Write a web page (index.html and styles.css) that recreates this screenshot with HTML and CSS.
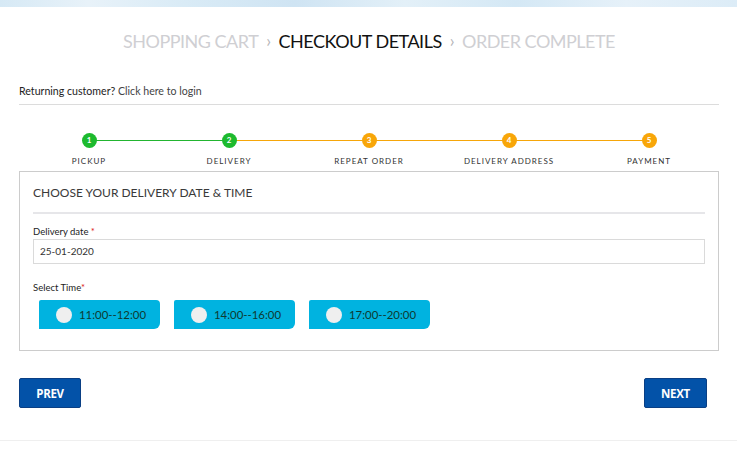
FILE: index.html
```html
<!DOCTYPE html>
<html>
<head>
<meta charset="utf-8">
<link rel="stylesheet" href="styles.css">
</head>
<body>
<div class="banner"></div>
<div class="page">
  <h1 class="crumbs">
    <span class="crumb">SHOPPING CART</span>
    <span class="sep">&#8250;</span>
    <span class="crumb active">CHECKOUT DETAILS</span>
    <span class="sep">&#8250;</span>
    <span class="crumb">ORDER COMPLETE</span>
  </h1>
  <div class="returning">Returning customer? <a class="login">Click here to login</a></div>

  <div class="steps">
    <div class="step done"><span class="dot">1</span><span class="lbl">PICKUP</span></div>
    <div class="step done"><span class="dot">2</span><span class="lbl">DELIVERY</span></div>
    <div class="step todo"><span class="dot">3</span><span class="lbl">REPEAT ORDER</span></div>
    <div class="step todo"><span class="dot">4</span><span class="lbl">DELIVERY ADDRESS</span></div>
    <div class="step todo last"><span class="dot">5</span><span class="lbl">PAYMENT</span></div>
  </div>

  <div class="box">
    <div class="box-title">CHOOSE YOUR DELIVERY DATE &amp; TIME</div>
    <label class="field-label">Delivery date <span class="req">*</span></label>
    <div class="input">25-01-2020</div>
    <label class="field-label time-label">Select Time<span class="req">*</span></label>
    <div class="slots">
      <div class="slot"><span class="radio"></span>11:00--12:00</div>
      <div class="slot"><span class="radio"></span>14:00--16:00</div>
      <div class="slot"><span class="radio"></span>17:00--20:00</div>
    </div>
  </div>

  <div class="nav">
    <button class="btn">PREV</button>
    <button class="btn">NEXT</button>
  </div>
</div>
<div class="footer-line"></div>
</body>
</html>
```

FILE: styles.css
```css
* { box-sizing: border-box; }
html, body { margin: 0; padding: 0; background: #fff; }
body { font-family: Lato, "Open Sans", sans-serif; color: #333; width: 737px; }

.banner {
  height: 7px;
  background: linear-gradient(90deg, #d6e9f5 0%, #e8f2f9 12%, #d9ebf6 25%, #cfe4f3 40%, #e3f0f8 55%, #d4e8f5 70%, #e6f1f9 85%, #dcecf7 100%);
}

.page { width: 700px; margin: 0 18px 0 19px; }

.crumbs {
  margin: 22px 0 0;
  text-align: center;
  font-weight: 400;
  font-size: 18px;
  line-height: 24px;
  letter-spacing: -0.5px;
  color: #cfcfd3;
  display: flex;
  justify-content: center;
  gap: 8px;
}
.crumb.active { color: #111; }
.sep { color: #b5b5b8; font-size: 17px; }

.returning {
  margin-top: 31px;
  font-size: 10.6px;
  color: #222;
  line-height: 14px;
  padding-bottom: 6px;
  border-bottom: 1px solid #dcdcdc;
}
.login { color: #444; }

.steps {
  display: grid;
  grid-template-columns: repeat(5, 1fr);
  margin-top: 28px;
}
.step {
  position: relative;
  display: flex;
  flex-direction: column;
  align-items: center;
}
.step::after {
  content: "";
  position: absolute;
  top: 7px;
  left: 50%;
  width: 100%;
  height: 1px;
  background: #f6a609;
}
.step.done:first-child::after { background: #22b530; }
.step.last::after { display: none; }
.dot {
  position: relative;
  z-index: 1;
  width: 15px;
  height: 15px;
  border-radius: 50%;
  color: #fff;
  font-size: 8px;
  font-weight: 700;
  line-height: 15px;
  text-align: center;
}
.done .dot { background: #1dba2e; }
.todo .dot { background: #f8a609; }
.lbl {
  margin-top: 8px;
  font-size: 8px;
  letter-spacing: 1px;
  color: #333;
  line-height: 10px;
}

.box {
  margin-top: 5px;
  border: 1px solid #cccccc;
  padding: 0 13px 21px;
}
.box-title {
  padding: 14px 0 12px;
  font-size: 12px;
  line-height: 14px;
  color: #3a3a3a;
  border-bottom: 2px solid #e6e6e9;
}
.field-label {
  display: block;
  font-size: 9.5px;
  line-height: 11px;
  color: #222;
  margin-top: 12px;
}
.req { color: #d22; }
.input {
  margin-top: 2px;
  height: 25px;
  border: 1px solid #dadada;
  padding: 0 6px;
  font-size: 10px;
  line-height: 23px;
  color: #333;
}
.time-label { margin-top: 18px; }
.slots {
  display: flex;
  gap: 14px;
  margin-top: 7px;
  padding-left: 6px;
}
.slot {
  width: 121px;
  height: 29px;
  background: #00b3e0;
  border-radius: 2px 4px 6px 0;
  display: flex;
  align-items: center;
  padding-left: 17px;
  gap: 7px;
  font-size: 11.4px;
  color: #0f3a30;
}
.radio {
  width: 16px;
  height: 16px;
  border-radius: 50%;
  background: #efefef;
}

.nav {
  display: flex;
  justify-content: space-between;
  margin-top: 27px;
  padding-right: 12px;
}
.btn {
  height: 30px;
  padding: 0 14px;
  border: 1px solid #0a3f84;
  border-radius: 2px;
  background: #0352a8;
  color: #fff;
  font-family: "Open Sans", Lato, sans-serif;
  font-weight: 700;
  font-size: 11.5px;
  letter-spacing: -0.3px;
}
.btn:first-child { width: 62px; }
.btn:last-child { width: 63px; }

.footer-line {
  margin-top: 32px;
  height: 1px;
  background: #efefef;
}
```
